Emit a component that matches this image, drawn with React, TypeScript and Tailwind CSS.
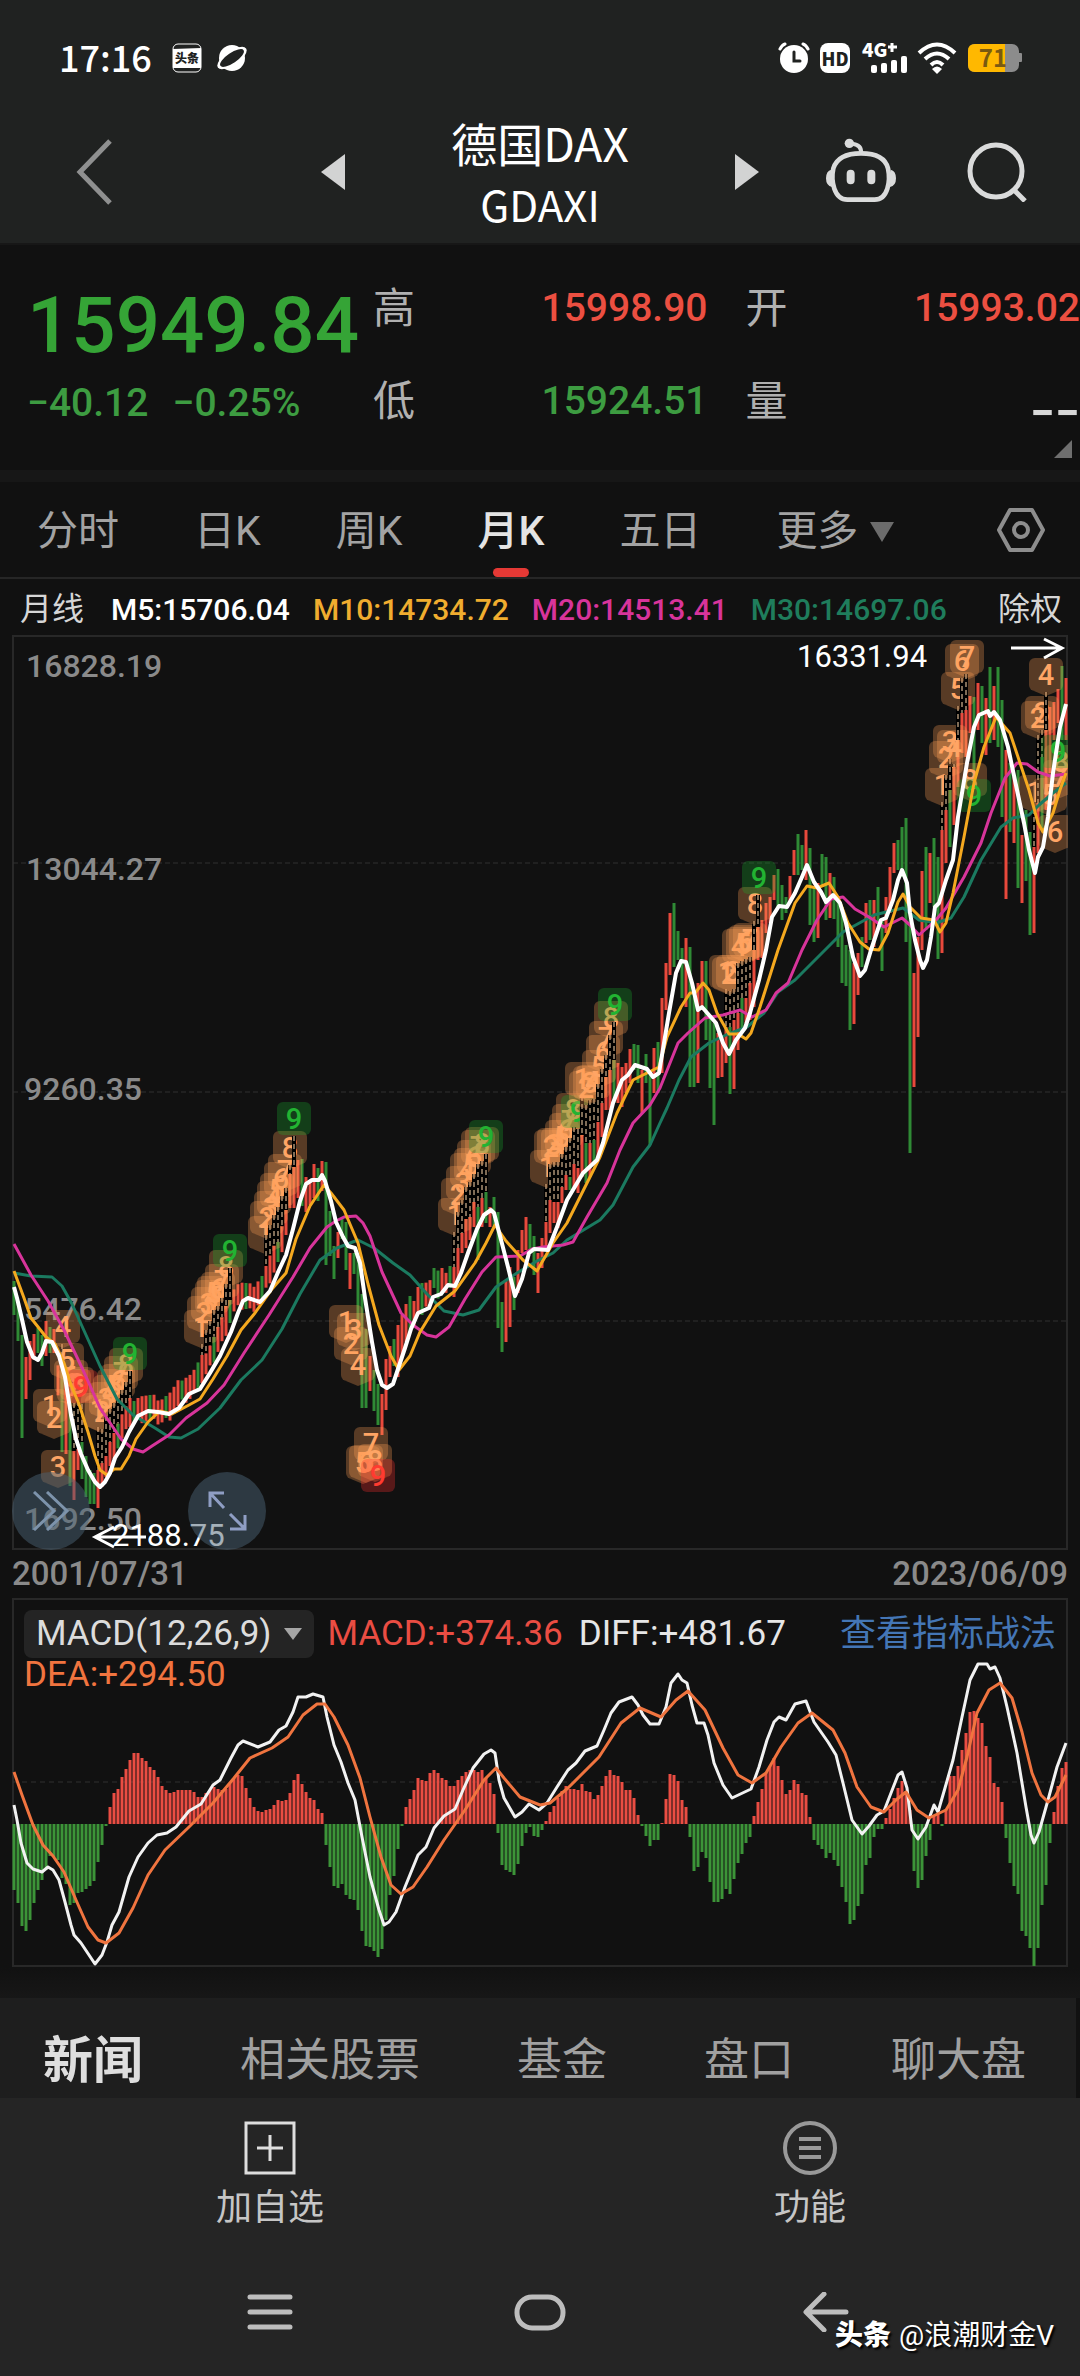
import React from "react";

type Candle = { x: number; top: number; bottom: number; up: boolean };

const RED = "#e8493c";
const GREEN = "#2f8a35";
const FIRST_X = 14;
const STEP = 4;
const COUNT = 264;

const ma5 =
  "14,1287 17,1298 21,1315 27,1342 33,1357 38,1360 42,1353 46,1341 52,1342 59,1356 65,1377 71,1415 76,1439 81,1454 88,1470 95,1482 100,1487 105,1482 110,1473 115,1458 122,1447 129,1432 138,1416 148,1411 158,1412 169,1414 179,1408 189,1394 200,1389 210,1373 220,1356 231,1332 238,1313 243,1301 248,1298 260,1302 270,1291 279,1270 286,1255 293,1229 300,1201 306,1184 312,1180 319,1180 322,1175 325,1181 331,1201 336,1222 343,1237 348,1246 355,1248 360,1263 365,1298 372,1342 377,1370 382,1385 387,1388 393,1384 399,1366 405,1348 411,1329 418,1313 429,1308 433,1297 441,1294 448,1285 455,1286 461,1273 468,1253 477,1229 484,1215 491,1210 494,1213 499,1232 508,1267 515,1296 522,1279 529,1253 534,1249 548,1250 557,1227 567,1200 583,1173 597,1160 603,1143 613,1103 622,1080 628,1075 635,1065 647,1069 653,1077 659,1073 664,1043 669,1013 676,973 681,961 686,962 692,983 698,1010 702,1007 709,1015 716,1023 723,1043 729,1054 736,1040 745,1028 750,1013 759,980 766,950 772,917 779,906 787,907 795,893 802,877 807,865 814,882 821,892 826,902 833,895 840,903 846,923 853,957 860,976 865,970 871,950 881,920 886,918 893,900 898,880 902,870 907,883 910,913 915,940 920,960 923,968 927,960 931,937 935,907 939,903 946,880 953,860 958,817 967,763 974,727 979,715 988,711 990,716 994,712 1000,720 1008,747 1017,790 1024,823 1029,850 1035,873 1038,857 1043,847 1048,817 1053,773 1060,727 1066,704";

const ma10 =
  "14,1271 24,1298 31,1318 46,1337 55,1344 64,1363 71,1385 79,1404 88,1432 95,1456 100,1470 107,1475 114,1469 121,1469 129,1456 136,1439 148,1422 160,1411 172,1414 189,1405 200,1399 213,1379 227,1356 241,1330 255,1313 272,1289 286,1273 296,1239 310,1206 324,1185 331,1193 344,1210 358,1243 368,1284 379,1325 391,1356 399,1370 410,1356 420,1332 436,1306 455,1291 475,1263 486,1243 495,1225 506,1241 523,1260 537,1271 553,1243 567,1223 582,1193 600,1157 617,1113 633,1080 647,1073 659,1067 667,1037 681,1007 690,993 695,993 703,983 709,990 717,1013 729,1034 738,1034 746,1039 751,1033 760,1007 778,950 795,903 807,886 817,888 829,883 838,897 848,923 860,942 869,949 879,950 888,933 898,902 903,894 910,907 921,918 934,920 940,932 946,923 953,893 964,837 974,783 984,747 996,717 1010,733 1019,760 1029,790 1038,823 1043,832 1053,813 1060,790 1066,773";

const ma20 =
  "14,1244 31,1275 48,1301 64,1330 83,1370 100,1408 121,1439 133,1449 143,1452 152,1446 169,1435 186,1418 207,1403 224,1385 244,1353 269,1315 293,1277 310,1248 327,1227 336,1221 344,1217 356,1216 363,1223 370,1236 382,1272 401,1313 413,1325 427,1335 436,1337 449,1327 465,1299 482,1272 496,1257 520,1256 532,1249 543,1247 563,1245 573,1242 587,1217 607,1183 620,1150 633,1123 650,1105 660,1088 666,1073 678,1043 688,1033 705,1018 723,1015 740,1010 752,1017 766,1010 776,993 788,983 802,950 817,920 831,899 843,897 855,909 869,917 884,927 902,918 910,925 919,935 936,920 946,908 964,877 981,843 991,813 1005,778 1017,763 1027,764 1038,772 1050,776 1066,774";

const ma30 =
  "14,1273 31,1276 52,1277 62,1286 72,1304 86,1335 100,1366 117,1399 133,1415 155,1428 169,1437 181,1438 198,1429 220,1408 241,1380 262,1360 282,1329 300,1294 320,1260 337,1248 358,1240 374,1248 393,1263 410,1275 427,1294 444,1311 463,1315 479,1310 496,1287 517,1273 537,1261 553,1253 567,1240 600,1220 613,1205 633,1167 650,1145 660,1123 667,1108 679,1080 691,1057 709,1043 726,1035 747,1027 764,1013 778,992 795,980 822,953 843,932 874,915 903,908 919,920 936,923 951,918 964,897 981,860 1001,827 1013,818 1029,815 1039,805 1053,793 1066,783";

const diffLine =
  "14,1805 17,1820 21,1843 27,1863 33,1869 42,1872 48,1867 53,1870 59,1880 65,1902 71,1925 74,1935 81,1943 95,1964 102,1955 107,1942 112,1925 119,1912 129,1877 138,1857 148,1843 157,1835 167,1833 176,1827 189,1811 201,1804 213,1785 220,1780 231,1758 238,1745 243,1741 258,1747 270,1742 279,1730 286,1726 293,1712 298,1697 306,1697 313,1694 323,1697 327,1717 334,1745 341,1762 348,1783 355,1800 362,1837 370,1877 379,1910 384,1925 389,1922 396,1912 405,1887 418,1855 426,1847 434,1828 444,1816 455,1809 463,1790 473,1768 484,1754 491,1750 495,1753 499,1780 504,1798 515,1817 522,1812 529,1804 539,1810 547,1803 557,1787 568,1770 576,1763 585,1751 597,1746 604,1730 611,1713 619,1702 632,1697 638,1705 643,1715 650,1724 659,1724 666,1707 671,1683 678,1674 682,1680 687,1683 692,1705 697,1723 704,1723 708,1735 714,1763 723,1785 732,1798 751,1789 759,1767 767,1740 774,1722 779,1717 786,1720 795,1704 806,1701 814,1722 828,1742 836,1755 843,1783 852,1820 862,1834 869,1826 877,1815 884,1811 891,1793 898,1775 902,1772 907,1788 912,1830 918,1839 926,1827 934,1805 938,1812 945,1788 953,1760 962,1717 970,1680 978,1664 987,1664 990,1669 995,1667 1000,1678 1007,1707 1017,1753 1026,1807 1031,1835 1034,1843 1039,1832 1048,1800 1057,1767 1066,1743";

const deaLine =
  "14,1772 22,1795 33,1825 43,1845 53,1856 64,1872 76,1900 88,1927 98,1940 106,1943 119,1933 133,1908 148,1875 165,1850 189,1827 213,1803 234,1778 250,1758 272,1748 288,1737 303,1715 317,1704 325,1704 334,1717 348,1745 360,1778 370,1817 381,1857 391,1885 401,1894 413,1887 427,1867 444,1840 465,1810 484,1780 496,1768 504,1778 520,1797 540,1805 550,1803 568,1788 599,1757 621,1723 640,1708 661,1717 676,1700 688,1691 705,1710 723,1748 738,1775 752,1783 766,1773 781,1747 798,1723 812,1713 833,1730 845,1753 857,1787 871,1807 884,1812 896,1800 906,1792 917,1810 929,1818 946,1810 958,1790 967,1757 977,1713 989,1690 1000,1683 1012,1698 1022,1732 1032,1773 1041,1795 1048,1802 1055,1797 1066,1775";

// x, high, low
const falling: number[][] = [
  [14, 1281, 1315], [18, 1301, 1341], [22, 1335, 1438], [38, 1328, 1353], [42, 1335, 1366], [50, 1327, 1353],
  [62, 1356, 1452], [70, 1397, 1486], [82, 1442, 1479], [86, 1456, 1497], [90, 1470, 1504], [94, 1473, 1504],
  [302, 1159, 1206], [318, 1168, 1201], [326, 1162, 1265], [330, 1211, 1256], [334, 1246, 1279], [342, 1218, 1239],
  [346, 1222, 1270], [354, 1253, 1274], [358, 1260, 1335], [362, 1294, 1408], [366, 1329, 1408], [374, 1370, 1411],
  [378, 1384, 1425], [394, 1339, 1366], [410, 1296, 1332], [422, 1283, 1315], [434, 1268, 1288], [450, 1266, 1288],
  [478, 1207, 1260], [486, 1192, 1223], [494, 1197, 1227], [498, 1212, 1328], [502, 1302, 1352], [514, 1277, 1310],
  [530, 1224, 1250], [534, 1236, 1275], [570, 1177, 1190], [586, 1143, 1183], [594, 1140, 1163], [614, 1060, 1103],
  [634, 1044, 1070], [638, 1045, 1083], [646, 1054, 1083], [650, 1070, 1145], [658, 1042, 1093], [674, 903, 967],
  [678, 931, 960], [682, 948, 998], [690, 947, 1087], [694, 990, 1087], [706, 961, 1040], [710, 1017, 1088],
  [714, 1023, 1125], [730, 1027, 1094], [742, 998, 1030], [778, 869, 907], [782, 885, 920], [786, 897, 913],
  [798, 834, 875], [802, 845, 870], [810, 848, 925], [814, 887, 942], [822, 854, 887], [826, 857, 920],
  [834, 877, 919], [838, 897, 947], [842, 907, 983], [846, 945, 986], [850, 950, 1030], [862, 937, 967],
  [870, 900, 940], [878, 887, 923], [882, 920, 971], [898, 840, 870], [902, 827, 877], [906, 818, 942],
  [910, 910, 1153], [926, 847, 930], [934, 838, 907], [938, 857, 959], [950, 790, 847], [974, 697, 780],
  [982, 686, 743], [990, 667, 743], [998, 667, 747], [1002, 700, 817], [1010, 763, 832], [1018, 770, 888],
  [1026, 810, 881], [1030, 832, 935], [1042, 757, 830], [1062, 666, 740],
];

const rising: number[][] = [
  [26, 1357, 1399], [30, 1341, 1380], [34, 1334, 1360], [46, 1321, 1356], [54, 1329, 1353], [66, 1370, 1454],
  [74, 1451, 1500], [78, 1449, 1470], [98, 1470, 1508], [102, 1463, 1487], [106, 1456, 1477], [110, 1442, 1466],
  [290, 1174, 1208], [294, 1167, 1208], [298, 1160, 1198], [306, 1177, 1212], [310, 1181, 1205], [314, 1164, 1198],
  [322, 1161, 1191], [338, 1232, 1258], [350, 1253, 1289], [370, 1356, 1391], [382, 1394, 1435], [386, 1359, 1410],
  [390, 1346, 1377], [398, 1325, 1377], [402, 1315, 1356], [406, 1304, 1342], [414, 1301, 1325], [418, 1287, 1315],
  [442, 1268, 1293], [454, 1267, 1297], [458, 1248, 1280], [462, 1233, 1253], [470, 1217, 1240], [474, 1202, 1227],
  [482, 1198, 1227], [490, 1207, 1227], [506, 1280, 1342], [510, 1267, 1327], [518, 1250, 1293], [522, 1230, 1253],
  [526, 1217, 1250], [538, 1253, 1293], [542, 1238, 1268], [546, 1222, 1250], [550, 1200, 1233], [554, 1202, 1223],
  [558, 1202, 1228], [562, 1187, 1203], [566, 1175, 1190], [574, 1164, 1187], [578, 1168, 1193], [582, 1135, 1177],
  [590, 1143, 1177], [598, 1122, 1160], [602, 1103, 1137], [606, 1077, 1110], [610, 1070, 1110], [618, 1063, 1103],
  [622, 1067, 1107], [626, 1063, 1093], [630, 1049, 1083], [642, 1070, 1113], [654, 1048, 1093], [662, 998, 1073],
  [666, 963, 1010], [670, 913, 975], [686, 938, 1007], [698, 983, 1083], [702, 961, 1010], [718, 1033, 1078],
  [722, 1035, 1077], [726, 1027, 1063], [734, 1020, 1089], [738, 1013, 1050], [746, 998, 1023], [750, 983, 1020],
  [754, 950, 1007], [758, 927, 960], [762, 920, 958], [766, 903, 933], [770, 897, 923], [774, 875, 900],
  [790, 876, 903], [794, 850, 875], [806, 830, 880], [818, 883, 938], [830, 873, 918], [854, 963, 1024],
  [858, 953, 995], [866, 903, 943], [874, 900, 947], [886, 897, 933], [890, 867, 913], [894, 843, 873],
  [914, 973, 1087], [918, 937, 1037], [922, 871, 950], [930, 853, 903], [942, 830, 953], [946, 810, 863],
  [954, 767, 825], [958, 740, 787], [962, 713, 753], [966, 710, 757], [970, 696, 733], [978, 683, 730],
  [986, 698, 755], [994, 686, 740], [1006, 750, 899], [1014, 777, 843], [1022, 835, 903], [1034, 847, 933],
  [1038, 803, 853], [1046, 730, 810], [1050, 707, 773], [1054, 702, 740], [1058, 689, 723], [1066, 678, 740],
];

const ma5Points = ma5.split(" ").map((p) => p.split(",").map(Number));

function ma5At(x: number) {
  const next = ma5Points.findIndex((p) => p[0] >= x);
  if (next <= 0) return ma5Points[next === 0 ? 0 : ma5Points.length - 1][1];
  const [x0, y0] = ma5Points[next - 1];
  const [x1, y1] = ma5Points[next];
  return y0 + ((y1 - y0) * (x - x0)) / (x1 - x0);
}

const known = new Map<number, Candle>();
falling.forEach(([x, top, bottom]) => known.set(x, { x, top, bottom, up: false }));
rising.forEach(([x, top, bottom]) => known.set(x, { x, top, bottom, up: true }));

// quiet months follow the five month average
const candles: Candle[] = Array.from({ length: COUNT }, (_, i) => {
  const x = FIRST_X + i * STEP;
  const mid = ma5At(x + 8) - 4;
  return (
    known.get(x) ?? {
      x,
      top: mid - 9 - ((i * 7) % 6),
      bottom: mid + 10 + ((i * 5) % 7),
      up: i % 4 !== 2,
    }
  );
});

// nine-count markers: x and y of 1 to 9
const counts: { last: "up" | "down"; at: number[][] }[] = [
  { last: "down", at: [[50, 1406], [54, 1418], [58, 1467], [63, 1327], [67, 1360], [71, 1377], [74, 1386], [77, 1384], [81, 1387]] },
  { last: "up", at: [[98, 1410], [102, 1412], [106, 1399], [110, 1392], [114, 1386], [118, 1381], [121, 1373], [126, 1365], [130, 1354]] },
  { last: "up", at: [[201, 1327], [204, 1313], [208, 1304], [212, 1297], [214, 1293], [218, 1289], [222, 1281], [226, 1267], [230, 1251]] },
  { last: "up", at: [[265, 1233], [267, 1218], [271, 1208], [274, 1198], [277, 1190], [281, 1179], [285, 1171], [290, 1148], [294, 1119]] },
  { last: "down", at: [[346, 1322], [351, 1344], [354, 1330], [358, 1365], [363, 1463], [366, 1462], [371, 1444], [375, 1461], [378, 1476]] },
  { last: "up", at: [[455, 1215], [458, 1195], [463, 1183], [467, 1170], [471, 1165], [474, 1157], [478, 1147], [482, 1144], [486, 1137]] },
  { last: "up", at: [[547, 1167], [551, 1147], [554, 1145], [558, 1145], [562, 1137], [566, 1130], [569, 1121], [573, 1110], [578, 1112]] },
  { last: "up", at: [[582, 1079], [586, 1088], [590, 1083], [593, 1082], [599, 1067], [603, 1052], [606, 1038], [611, 1018], [615, 1005]] },
  { last: "up", at: [[726, 972], [729, 974], [733, 972], [739, 946], [743, 944], [746, 942], [750, 940], [755, 904], [759, 878]] },
  { last: "up", at: [[942, 785], [946, 758], [950, 742], [954, 747], [958, 689], [962, 661], [967, 657], [970, 780], [974, 796]] },
  { last: "up", at: [[1035, 792], [1038, 718], [1042, 713], [1046, 675], [1050, 795], [1055, 832], [1060, 777], [1061, 762], [1058, 752]] },
];

const macdBars = [
  -66, -79, -102, -107, -96, -79, -66, -56, -46, -32, -33, -36, -54, -60, -81, -79, -69, -68, -65, -62, -57, -38, -21, -2,
  17, 31, 35, 47, 55, 64, 71, 71, 66, 63, 57, 54, 47, 38, 34, 31, 32, 34, 34, 34, 34, 32, 27, 27, 31, 34, 37, 35, 34, 35,
  41, 46, 49, 48, 36, 26, 17, 13, 12, 14, 15, 19, 24, 23, 24, 31, 44, 50, 40, 32, 26, 24, 15, 11, -21, -43, -62, -64, -60,
  -71, -75, -76, -86, -107, -122, -123, -127, -133, -125, -96, -71, -52, -25, -2, 17, 25, 34, 46, 44, 43, 51, 54, 51, 46,
  44, 38, 38, 44, 48, 52, 54, 54, 52, 54, 46, 41, 30, -9, -41, -46, -48, -51, -40, -22, -9, -3, -12, -13, -6, 3, 12, 18,
  26, 33, 38, 35, 35, 34, 40, 33, 32, 25, 29, 38, 48, 54, 49, 48, 42, 34, 34, 26, 9, -2, -12, -22, -16, -16, 1, 25, 50,
  49, 43, 24, 17, -13, -47, -43, -28, -34, -58, -78, -78, -75, -65, -70, -55, -39, -30, -19, -13, 8, 22, 35, 51, 58, 66,
  58, 44, 30, 34, 44, 40, 31, 29, 7, -16, -21, -25, -34, -29, -36, -42, -63, -78, -100, -96, -82, -70, -41, -34, -13, -5,
  -5, 6, 15, 26, 36, 43, 33, 14, -47, -64, -56, -32, -16, 9, 11, -2, 14, 48, 48, 58, 74, 91, 112, 113, 106, 101, 78, 67,
  41, 37, 22, -14, -39, -62, -70, -107, -112, -124, -142, -124, -81, -61, -19, 12, 38, 56, 62,
];

const axisLabels = [
  { text: "16828.19", y: 677 },
  { text: "13044.27", y: 880 },
  { text: "9260.35", y: 1100 },
  { text: "5476.42", y: 1320 },
  { text: "1692.50", y: 1530 },
];

const Marker = ({ n, x, y, last }: { n: number; x: number; y: number; last: "up" | "down" }) => {
  const nine = n === 9;
  const fill = !nine ? "#ff9f55" : last === "up" ? "#19a830" : "#ff3030";
  const ink = !nine ? "#ffa565" : last === "up" ? "#22b332" : "#ff3b30";
  const candle = candles[Math.min(COUNT - 1, Math.round((x - FIRST_X) / STEP))];
  const tip = y + 17;
  return (
    <g>
      {candle.top > tip && (
        <>
          <path d={`M${candle.x} ${tip}V${candle.top}`} stroke="#000" strokeWidth="4" />
          <path d={`M${candle.x} ${tip}V${candle.top}`} stroke="#ffd9ae" strokeDasharray="5 3" />
        </>
      )}
      <rect x={x - 17} y={y - 17} width="34" height="33" rx="6" fill={fill} fillOpacity="0.3" />
      {!nine && <path d={`M${x - 12} ${y + 16}H${x + 12}L${x} ${y + 21}Z`} fill={fill} fillOpacity="0.3" />}
      <text x={x} y={y + 10} fill={ink} fontSize="29" fontWeight="500" textAnchor="middle">
        {n}
      </text>
    </g>
  );
};

const StatusBar = () => (
  <div className="flex h-[100px] items-center pt-4 pr-[58px] pl-[59px] text-white">
    <span className="-mt-1 text-[36px] leading-10 font-medium">17:16</span>
    <svg className="ml-5 h-[30px] w-[30px]" viewBox="0 0 30 30">
      <rect x="1" y="1" width="28" height="28" rx="5" fill="none" stroke="#fff" />
      <path d="M1 6l28-1v20l-28 0z" fill="#fff" />
      <text x="15" y="20" fontSize="12" fontWeight="900" textAnchor="middle" fill="#202221">
        头条
      </text>
    </svg>
    <svg className="ml-[15px] h-[30px] w-[30px]" viewBox="0 0 30 30">
      <circle cx="15" cy="15" r="13" fill="#fff" />
      <ellipse cx="15" cy="15" rx="17" ry="7" fill="#fff" transform="rotate(-34 15 15)" />
      <ellipse cx="15" cy="15" rx="14" ry="5" fill="#202221" transform="rotate(-34 15 15)" />
    </svg>
    <div className="ml-auto flex items-center">
      <svg className="h-8 w-8" viewBox="0 0 32 32" fill="none" stroke="#fff" strokeWidth="3" strokeLinecap="round">
        <circle cx="16" cy="17" r="14" fill="#fff" stroke="none" />
        <path d="M2 7Q4 3 7 2M30 7Q28 3 25 2" />
        <path d="M16 10v9h6" stroke="#202221" />
      </svg>
      <span className="ml-[10px] flex h-[30px] w-[30px] items-center justify-center rounded-lg bg-white text-[18px] leading-7 font-black text-[#202221]">
        HD
      </span>
      <svg className="ml-3 h-8 w-[46px] overflow-visible" viewBox="0 0 46 32" fill="#fff">
        <text x="0" y="15" fontSize="19" fontWeight="800">4G</text>
        <path d="M26 5h9M30 1v9" stroke="#fff" strokeWidth="3" />
        <rect x="9" y="23" width="6" height="8" rx="2" />
        <rect x="19" y="21" width="6" height="10" rx="2" />
        <rect x="29" y="18" width="6" height="13" rx="2" />
        <rect x="39" y="14" width="6" height="17" rx="2" />
      </svg>
      <svg className="ml-[9px] h-8 w-[40px]" viewBox="0 0 40 32" fill="none" stroke="#fff" strokeWidth="4">
        <path d="M2 11Q20-6 38 11" />
        <path d="M8 17Q20 6 32 17" />
        <path d="M14 23Q20 17 26 23" />
        <path d="M15 27Q20 22 25 27L20 32Z" fill="#fff" stroke="none" />
      </svg>
      <svg className="ml-[11px] h-7 w-[54px] overflow-visible" viewBox="0 0 54 28">
        <rect x="0" y="0" width="51" height="28" rx="7" fill="#8c8c8c" />
        <rect x="50" y="9" width="4" height="9" rx="1" fill="#8c8c8c" />
        <path d="M7 0H37V28H7Q0 28 0 21V7Q0 0 7 0Z" fill="#ffb800" />
        <text x="25" y="23" fontSize="24" fontWeight="600" textAnchor="middle" fill="#7a5a10">71</text>
      </svg>
    </div>
  </div>
);

const Header = () => (
  <div className="grid h-[143px] grid-cols-[1fr_438px_1fr] items-center">
    <div className="pl-[76px]">
      <button aria-label="返回" className="block">
        <svg className="h-[66px] w-9" viewBox="0 0 36 66" fill="none" stroke="#8f9090" strokeWidth="5">
          <path d="M34 2L4 33L34 64" />
        </svg>
      </button>
    </div>
    <div className="flex items-center justify-between">
      <button aria-label="上一个">
        <svg className="h-9 w-6" viewBox="0 0 24 36" fill="#d2d3d3">
          <path d="M24 0V36L0 18Z" />
        </svg>
      </button>
      <h1 className="text-center text-white">
        <span className="block text-[46px] leading-[64px]">德国DAX</span>
        <span className="block text-[42px] leading-[60px]">GDAXI</span>
      </h1>
      <button aria-label="下一个">
        <svg className="h-9 w-6" viewBox="0 0 24 36" fill="#d2d3d3">
          <path d="M0 0V36L24 18Z" />
        </svg>
      </button>
    </div>
    <div className="flex items-center justify-between pr-[53px] pl-[67px]">
      <button aria-label="智能助手" className="-mt-1">
        <svg className="h-16 w-[70px] overflow-visible" viewBox="0 0 210 190" fill="none" stroke="#dadbdb" strokeWidth="14">
          <path d="M105 45C150 45 178 58 186 90C194 128 186 184 146 184H64C24 184 14 128 22 90C32 58 60 45 105 45Z" />
          <path d="M105 44C107 25 96 18 78 16" strokeWidth="12" />
          <circle cx="70" cy="15" r="14" fill="#dadbdb" stroke="none" />
          <path d="M16 94Q0 98 0 120Q0 142 18 146ZM194 94Q210 98 210 120Q210 142 192 146Z" fill="#dadbdb" stroke="none" />
          <path d="M74 106v20M136 106v20" strokeWidth="24" strokeLinecap="round" />
        </svg>
      </button>
      <button aria-label="搜索">
        <svg className="h-[60px] w-[60px]" viewBox="0 0 60 60" fill="none" stroke="#dadbdb" strokeWidth="5">
          <circle cx="29" cy="29" r="26" />
          <path d="M47 48L58 59" />
        </svg>
      </button>
    </div>
  </div>
);

const Stat = ({ label, value, tone }: { label: string; value: string; tone: string }) => (
  <div className="flex h-[93px] items-center justify-between">
    <dt className="text-[42px] text-[#b0b0b0]">{label}</dt>
    <dd className={tone}>{value}</dd>
  </div>
);

const Quote = () => (
  <section className="h-[227px] border-t-2 border-[#171717] pt-[17px]">
    <div className="flex">
      <div className="w-[373px] shrink-0 pl-[27px] text-[#35a436]">
        <p className="pt-5 text-[78px] leading-[88px] font-medium">15949.84</p>
        <p className="flex gap-6 text-[39px] leading-[66px] font-medium text-[#3d9c41]">
          <span>−40.12</span>
          <span>−0.25%</span>
        </p>
      </div>
      <dl className="grid flex-1 grid-cols-2 gap-x-[38px]">
        <Stat label="高" value="15998.90" tone="text-[39px] font-medium text-[#ec4f41]" />
        <Stat label="开" value="15993.02" tone="text-[39px] font-medium text-[#ec4f41]" />
        <Stat label="低" value="15924.51" tone="text-[39px] font-medium text-[#3d9c41]" />
        <Stat
          label="量"
          value="--"
          tone="font-['Noto_Sans_CJK_SC',sans-serif] text-[72px] leading-[80px] text-[#d8d8d8]"
        />
      </dl>
    </div>
    <svg className="-mt-2 mr-2 ml-auto h-[18px] w-[18px]" viewBox="0 0 18 18" fill="#6f6f6f">
      <path d="M18 0V18H0Z" />
    </svg>
  </section>
);

const PeriodTabs = () => (
  <nav className="flex h-[97px] items-center gap-[75px] border-b-2 border-[#262626] pr-[35px] pl-[37px] text-[41px] text-[#a3a3a3]">
    <button className="pt-1">分时</button>
    <button className="pt-1">日K</button>
    <button className="pt-1">周K</button>
    <button className="flex h-full flex-col items-center justify-between font-medium text-[#e4e4e4]">
      <span className="h-[86px] leading-[99px]">月K</span>
      <span className="h-[9px] w-9 rounded-full bg-[#e53935]" />
    </button>
    <button className="pt-1">五日</button>
    <button className="flex items-center gap-3 pt-1">
      更多
      <svg className="h-5 w-6" viewBox="0 0 24 20" fill="#6c6c6c">
        <path d="M0 0H24L12 20Z" />
      </svg>
    </button>
    <button aria-label="设置" className="ml-auto">
      <svg className="h-[46px] w-12" viewBox="0 0 48 46" fill="none" stroke="#8d8d8d" strokeWidth="4" strokeLinejoin="round">
        <path d="M13 3H35L46 23L35 43H13L2 23Z" />
        <circle cx="24" cy="23" r="7" />
      </svg>
    </button>
  </nav>
);

const Averages = () => (
  <div className="flex h-[56px] items-center pt-1 pr-[18px] pl-5 text-[30px] font-medium">
    <span className="text-[32px] font-normal text-[#d6d6d6]">月线</span>
    <span className="ml-[27px] text-white">M5:15706.04</span>
    <span className="ml-[23px] text-[#f0ad2f]">M10:14734.72</span>
    <span className="ml-[23px] text-[#d8349b]">M20:14513.41</span>
    <span className="ml-[23px] text-[#1f7d5c]">M30:14697.06</span>
    <span className="ml-auto text-[32px] font-normal text-[#d6d6d6]">除权</span>
  </div>
);

const PriceChart = () => (
  <div className="relative mx-3">
    <svg className="block w-full" viewBox="12 635 1056 915" fill="none">
      <rect x="13" y="636" width="1054" height="913" stroke="#282828" strokeWidth="2" />
      <path d="M13 863H1066M13 1092H1066M13 1321H1066" stroke="#303030" strokeWidth="1" strokeDasharray="5 3" />
      {axisLabels.map((label) => (
        <text key={label.text} x={label.text.length > 7 ? 26 : 24} y={label.y} fontSize="32" fontWeight="500" fill="#8a8a8a">
          {label.text}
        </text>
      ))}
      {candles.map((c) => (
        <path key={c.x} d={`M${c.x} ${c.top}V${c.bottom}`} stroke={c.up ? RED : GREEN} strokeWidth="3" />
      ))}
      {counts.map((group, g) =>
        group.at.map(([x, y], i) => <Marker key={`${g}-${i}`} n={i + 1} x={x} y={y} last={group.last} />)
      )}
      <g strokeWidth="3" strokeLinejoin="round">
        <polyline points={ma30} stroke="#1b7a60" />
        <polyline points={ma20} stroke="#d8349b" />
        <polyline points={ma10} stroke="#f5a91f" />
        <polyline points={ma5} stroke="#fff" strokeWidth="4" />
      </g>
      <text x="797" y="667" fontSize="31" fill="#fff">16331.94</text>
      <text x="112" y="1546" fontSize="31" fill="#fff">2188.75</text>
      <path d="M1011 648H1061M1044 639L1062 648L1044 658" stroke="#fff" strokeWidth="3" />
      <path d="M146 1537H96M114 1527L95 1537L114 1547" stroke="#fff" strokeWidth="3" />
    </svg>
    <div className="absolute bottom-0 left-0 flex gap-[98px]">
      <button aria-label="收起" className="flex h-[78px] w-[78px] items-center justify-center rounded-full bg-[#4a6274]/50">
        <svg className="h-10 w-10" viewBox="0 0 40 40" fill="none" stroke="#7d93ab" strokeWidth="3">
          <path d="M3 1L23 20L3 39M16 1L36 20L16 39" />
        </svg>
      </button>
      <button aria-label="全屏" className="flex h-[78px] w-[78px] items-center justify-center rounded-full bg-[#4a6274]/50">
        <svg className="h-10 w-10" viewBox="0 0 40 40" fill="none" stroke="#8f9ec4" strokeWidth="3">
          <path d="M17 2H3V16M3 2L17 17M38 24V38H23M38 38L23 23" />
        </svg>
      </button>
    </div>
  </div>
);

const MacdChart = () => (
  <div className="mx-3 grid">
    <svg className="col-start-1 row-start-1 block w-full" viewBox="12 1598 1056 370" fill="none">
      <rect x="13" y="1599" width="1054" height="367" stroke="#282828" strokeWidth="2" />
      <path d="M13 1782H1066" stroke="#303030" strokeDasharray="5 4" />
      {macdBars.map((v, i) => (
        <path key={i} d={`M${FIRST_X + i * STEP} 1824v${-v}`} stroke={v > 0 ? "#ea4d43" : "#3c9438"} strokeWidth="3" />
      ))}
      <g strokeWidth="3" strokeLinejoin="round">
        <polyline points={diffLine} stroke="#f2f2f2" />
        <polyline points={deaLine} stroke="#f0743f" />
      </g>
    </svg>
    <div className="col-start-1 row-start-1 px-3 pt-3 text-[35px]">
      <div className="flex h-12 items-center">
        <button className="flex h-12 items-center gap-3 rounded-lg bg-[#242424] px-3 text-[#dcdcdc]">
          MACD(12,26,9)
          <svg className="h-3 w-[18px]" viewBox="0 0 18 12" fill="#a5a5a5">
            <path d="M0 0H18L9 12Z" />
          </svg>
        </button>
        <span className="ml-[14px] text-[#ea4d43]">MACD:+374.36</span>
        <span className="ml-4 text-[#e6e6e6]">DIFF:+481.67</span>
        <a href="#strategy" className="ml-auto text-[36px] text-[#4476b5]">
          查看指标战法
        </a>
      </div>
      <p className="leading-[34px] text-[#f0743f]">DEA:+294.50</p>
    </div>
  </div>
);

const NewsTabs = () => (
  <nav className="mr-1 flex h-[100px] items-center gap-[97px] bg-[#1e1e1e] pt-[26px] pl-[43px] text-[45px] whitespace-nowrap text-[#a0a0a0]">
    <button className="text-[50px] leading-[60px] font-bold text-[#dedede]">新闻</button>
    <button>相关股票</button>
    <button>基金</button>
    <button>盘口</button>
    <button>聊大盘</button>
  </nav>
);

const BottomBar = () => (
  <footer className="bg-[#252525]">
    <div className="grid grid-cols-2 pt-[22px] text-[36px] leading-[56px] text-[#c6c6c6]">
      <button className="flex flex-col items-center gap-1">
        <svg className="h-14 w-14" viewBox="0 0 56 56" fill="none" stroke="#dedede" strokeWidth="3">
          <path d="M4 3H52V53H4ZM28 15V41M15 28H41" />
        </svg>
        加自选
      </button>
      <button className="flex flex-col items-center gap-1">
        <svg className="h-14 w-14" viewBox="0 0 56 56" fill="none" stroke="#999" strokeWidth="4">
          <circle cx="28" cy="28" r="25" />
          <path d="M17 19H39M17 28H39M17 37H39" />
        </svg>
        功能
      </button>
    </div>
    <div className="grid h-[141px] grid-cols-4 pt-14">
      <button aria-label="最近任务" className="col-start-1 flex h-10 justify-end">
        <svg className="-mr-6 h-10 w-12" viewBox="0 0 48 40" fill="none" stroke="#bdbdbd" strokeWidth="5" strokeLinecap="round">
          <path d="M4 5H44M4 20H44M4 35H44" />
        </svg>
      </button>
      <button aria-label="主屏幕" className="col-span-2 flex h-10 justify-center">
        <svg className="h-10 w-[54px]" viewBox="0 0 54 40" fill="none" stroke="#bdbdbd" strokeWidth="5">
          <rect x="4" y="5" width="46" height="31" rx="15" />
        </svg>
      </button>
      <div className="relative">
        <button aria-label="后退" className="-ml-2 block h-10">
          <svg className="h-10 w-12" viewBox="0 0 48 40" fill="none" stroke="#bdbdbd" strokeWidth="5" strokeLinecap="round" strokeLinejoin="round">
            <path d="M44 20H5M22 2L4 20L22 38" />
          </svg>
        </button>
        <p className="absolute top-6 right-[26px] flex items-center gap-2 text-[28px] leading-10 whitespace-nowrap text-white [text-shadow:2px_2px_2px_#000]">
          <span className="font-black">头条</span>
          @浪潮财金V
        </p>
      </div>
    </div>
  </footer>
);

export default function App() {
  return (
    <main className="w-full overflow-hidden bg-[#111] font-[Roboto,'Noto_Sans_CJK_SC',sans-serif]">
      <header className="bg-[#202221] font-['Noto_Sans_CJK_SC',sans-serif]">
        <StatusBar />
        <Header />
      </header>
      <Quote />
      <div className="h-3 bg-[#171717]" />
      <PeriodTabs />
      <Averages />
      <PriceChart />
      <div className="mx-3 flex h-12 items-center justify-between text-[33px] font-medium text-[#8a8a8a]">
        <span>2001/07/31</span>
        <span>2023/06/09</span>
      </div>
      <MacdChart />
      <div className="h-[30px] bg-linear-to-b from-[#111] to-[#171717]" />
      <NewsTabs />
      <BottomBar />
    </main>
  );
}
